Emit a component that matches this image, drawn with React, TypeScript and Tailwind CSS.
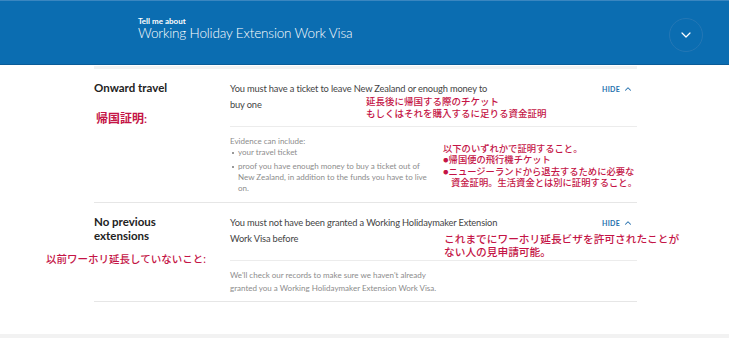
import { ChevronDown, ChevronUp } from "lucide-react";

const red = "text-[#c41446]";

function Hide() {
	return (
		<button type="button" className="flex items-center gap-[3px] text-[7px] font-bold tracking-[0.3px] text-[#2470ad]">
			HIDE
			<ChevronUp size={10} strokeWidth={2.5} />
		</button>
	);
}

function Bullet({ children }: { children: React.ReactNode }) {
	return (
		<li className="flex gap-[4px]">
			<span className="mt-[5px] h-[2px] w-[2px] shrink-0 bg-[#999]" />
			<span>{children}</span>
		</li>
	);
}

export default function App() {
	return (
		<div className="relative h-[338px] w-[729px] overflow-hidden bg-white font-['Lato','Noto_Sans_CJK_JP',sans-serif]">
			<header className="h-[65px] border-t border-t-[#3a86c0] border-b border-b-[#0a5c98] bg-[#0b6db1]">
				<div className="flex items-start justify-between pl-[138px] pr-[26px] pt-[15px]">
					<div className="text-white">
						<div className="text-[8px] font-bold leading-[10px]">Tell me about</div>
						<div className="text-[13.5px] font-light leading-[14px] tracking-[-0.15px]">Working Holiday Extension Work Visa</div>
					</div>
					<div className="mt-[2px] flex h-[34px] w-[34px] items-center justify-center rounded-full border border-[#2477b5] text-white">
						<ChevronDown size={16} strokeWidth={1.8} />
					</div>
				</div>
			</header>

			<main className="ml-[94px] w-[543px]">
				<div className="mt-[1px] h-[3px] bg-[#f2f2f2]" />

				{/* Onward travel */}
				<section className="relative flex border-b border-[#e6e6e6] pt-[12px] pb-[8px]">
					<div className="w-[136px] shrink-0">
						<h3 className="text-[11.5px] font-bold leading-[14px] text-[#222]">Onward travel</h3>
					</div>
					<div className="flex-1">
						<div className="flex justify-between border-b border-[#ececec] pb-[13px] pr-[4px]">
							<p className="text-[9.3px] leading-[16px] tracking-[-0.15px] text-[#444]">
								You must have a ticket to leave New Zealand or enough money to
								<br />
								buy one
							</p>
							<div className="pt-[3px]">
								<Hide />
							</div>
						</div>
						<div className="pt-[9px] text-[8px] leading-[11px] text-[#8c8c8c]">
							<p>Evidence can include:</p>
							<ul className="flex flex-col gap-[3px] pl-[2px]">
								<Bullet>your travel ticket</Bullet>
								<Bullet>
									proof you have enough money to buy a ticket out of
									<br />
									New Zealand, in addition to the funds you have to live
									<br />
									on.
								</Bullet>
							</ul>
						</div>
					</div>

					<p className={`absolute left-[2px] top-[42px] whitespace-nowrap text-[12px] font-semibold leading-[16px] ${red}`}>帰国証明:</p>
					<p className={`absolute left-[272px] top-[27px] whitespace-nowrap text-[9.5px] font-medium leading-[11.7px] ${red}`}>
						延長後に帰国する際のチケット
						<br />
						もしくはそれを購入するに足りる資金証明
					</p>
					<p className={`absolute left-[349px] top-[74px] whitespace-nowrap text-[9.3px] font-medium leading-[11.4px] ${red}`}>
						以下のいずれかで証明すること。
						<br />
						●帰国便の飛行機チケット
						<br />
						●ニュージーランドから退去するために必要な
						<br />
						<span className="pl-[8px]">資金証明。生活資金とは別に証明すること。</span>
					</p>
				</section>

				{/* No previous extensions */}
				<section className="relative flex border-b border-[#e6e6e6] pt-[12px] pb-[7px]">
					<div className="w-[136px] shrink-0">
						<h3 className="text-[11.5px] font-bold leading-[13.5px] text-[#222]">
							No previous
							<br />
							extensions
						</h3>
					</div>
					<div className="flex-1">
						<div className="flex justify-between border-b border-[#ececec] pb-[13px] pr-[4px]">
							<p className="text-[9.3px] leading-[16px] tracking-[-0.15px] text-[#444]">
								You must not have been granted a Working Holidaymaker Extension
								<br />
								Work Visa before
							</p>
							<div className="pt-[3px]">
								<Hide />
							</div>
						</div>
						<p className="pt-[8px] text-[8px] leading-[12.7px] text-[#8c8c8c]">
							We'll check our records to make sure we haven't already
							<br />
							granted you a Working Holidaymaker Extension Work Visa.
						</p>
					</div>

					<p className={`absolute left-[-48px] top-[49px] whitespace-nowrap text-[10.5px] font-medium leading-[14px] ${red}`}>
						以前ワーホリ延長していないこと:
					</p>
					<p className={`absolute left-[350px] top-[29px] whitespace-nowrap text-[10.7px] font-medium leading-[13.3px] ${red}`}>
						これまでにワーホリ延長ビザを許可されたことが
						<br />
						ない人の見申請可能。
					</p>
				</section>
			</main>

			<div className="absolute bottom-0 left-0 h-[4px] w-full bg-[#f2f2f2]" />
		</div>
	);
}
